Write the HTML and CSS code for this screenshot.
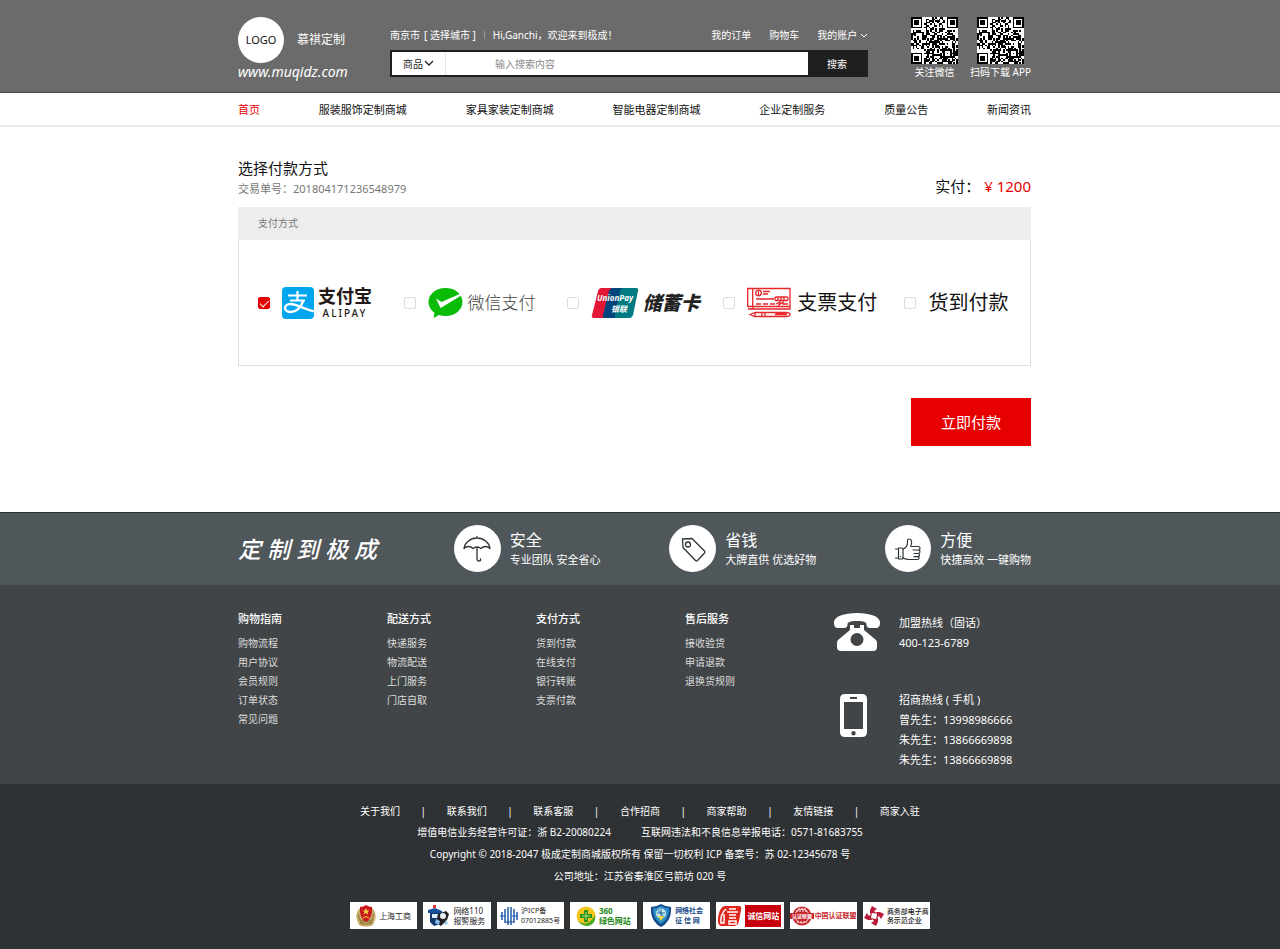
FILE: index.html
```
<!DOCTYPE html>
<html lang="zh-CN">
<head>
<meta charset="UTF-8">
<meta name="viewport" content="width=device-width, initial-scale=1.0">
<title>选择付款方式 - 慕祺定制</title>
<link rel="stylesheet" href="styles.css">
</head>
<body>
<header class="header">
    <div class="wrap header-inner">
        <a class="brand" href="#">
            <span class="brand-top">
                <span class="brand-logo">LOGO</span>
                <span class="brand-name">慕祺定制</span>
            </span>
            <span class="brand-url">www.muqidz.com</span>
        </a>
        <div class="header-main">
            <div class="topbar">
                <span>南京市</span>
                <a class="topbar-city" href="#">[ 选择城市 ]</a>
                <span class="topbar-line"></span>
                <span>Hi,Ganchi，欢迎来到极成！</span>
                <div class="topbar-links">
                    <a href="#">我的订单</a>
                    <a href="#">购物车</a>
                    <a href="#">我的账户 <svg width="8" height="6" viewBox="0 0 8 6"><path d="M1 1l3 3 3-3" fill="none" stroke="currentColor"/></svg></a>
                </div>
            </div>
            <form class="search">
                <div class="search-type">
                    <select aria-label="搜索类型"><option>商品</option><option>店铺</option></select>
                    <svg width="10" height="7" viewBox="0 0 10 7"><path d="M1 1l4 4 4-4" fill="none" stroke="#222" stroke-width="1.3"/></svg>
                </div>
                <input class="search-input" type="text" placeholder="输入搜索内容" aria-label="搜索内容">
                <button class="search-btn" type="button">搜索</button>
            </form>
        </div>
        <div class="codes">
            <div class="code"><svg class="qr" viewBox="0 0 29 29" shape-rendering="crispEdges"></svg><span>关注微信</span></div>
            <div class="code"><svg class="qr" viewBox="0 0 29 29" shape-rendering="crispEdges"></svg><span>扫码下载 APP</span></div>
        </div>
    </div>
</header>

<nav class="nav">
    <div class="wrap nav-inner">
        <a class="active" href="#">首页</a>
        <a href="#">服装服饰定制商城</a>
        <a href="#">家具家装定制商城</a>
        <a href="#">智能电器定制商城</a>
        <a href="#">企业定制服务</a>
        <a href="#">质量公告</a>
        <a href="#">新闻资讯</a>
    </div>
</nav>

<main class="wrap main">
    <div class="order">
        <div>
            <h1>选择付款方式</h1>
            <p class="order-no">交易单号：201804171236548979</p>
        </div>
        <p class="order-total">实付： <span>¥ 1200</span></p>
    </div>
    <div class="pay">
        <h2 class="pay-head">支付方式</h2>
        <div class="pay-list">
            <label class="pay-item">
                <input type="checkbox" checked>
                <svg class="pay-logo" width="32" height="32" viewBox="0 0 32 32">
                    <rect width="32" height="32" rx="4" fill="#00a5ef"/>
                    <g fill="none" stroke="#fff" stroke-width="2.2">
                        <path d="M6 8.500h19M8 13.500h15M15.500 4v9.500"/>
                        <path d="M21.500 13.500c-2 5-5.500 11.500-12.500 11.500-3.500 0-6-1.500-6-4 0-2 2-4 5.500-4 6 0 13 5 24 7.500" stroke-width="2.400"/>
                    </g>
                </svg>
                <span class="alipay"><b>支付宝</b><span>ALIPAY</span></span>
            </label>
            <label class="pay-item">
                <input type="checkbox">
                <svg class="pay-logo" width="35" height="32" viewBox="0 0 35 32">
                    <path d="M17.500 1C8 1 .5 7.200.5 15c0 4.500 2.300 8.200 6 10.800L5.500 31l5.500-3c2 .7 4.200 1 6.500 1C27 29 34.500 22.800 34.500 15S27 1 17.500 1z" fill="#0abb07"/>
                    <path d="M8 11.500l5.500 3.500L34 6v2L13.500 20.500q-1 .5-1.500-.5z" fill="#fff"/>
                </svg>
                <span class="wechat">微信支付</span>
            </label>
            <label class="pay-item">
                <input type="checkbox">
                <svg class="pay-logo" width="48" height="32" viewBox="0 0 48 32">
                    <path d="M10 1h14l-7 30H3q-3 0-2-3L7 4q1-3 3-3z" fill="#e21836"/>
                    <path d="M22 1h14l-7 30H14q-3 0-2-3L18 4q1-3 4-3z" fill="#00447c"/>
                    <path d="M33 1h12q3 0 2 3l-5 24q-1 3-4 3H26q-3 0-2-3l5-24q1-3 4-3z" fill="#007b84"/>
                    <text class="union-en" x="6" y="14">UnionPay</text>
                    <text class="union-cn" x="20" y="25">银联</text>
                </svg>
                <span class="deposit">储蓄卡</span>
            </label>
            <label class="pay-item">
                <input type="checkbox">
                <svg class="pay-logo cheque-logo" width="44" height="32" viewBox="0 0 44 32">
                    <g fill="none" stroke="#e8262b" stroke-width="1.300">
                        <path d="M.7 1.500h5v18h-5zM5.500 1.500h37.500v20.500H6V19.500M1 22h5M6 19.500h37"/>
                        <circle cx="11.500" cy="6" r="2.800"/>
                        <path d="M11.500 4v4M16 4.500h7M16 7h5"/>
                        <path d="M9 12h18" stroke-width="1.500"/>
                        <path d="M9 17h5M16 17h5M23 17h5M29 17l4-2-1 3 4-3v2h5"/>
                        <rect x="28" y="10" width="13" height="3.500" rx="1"/>
                        <path d="M31 10v3M34 10v3M37 10v3"/>
                        <path d="M3 27.500l5-2h31q4 0 4 2t-4 2H8zM8 25.500v4M15 25.500v4M18 25.500v4M28 27.500h12l-3-1h-6z"/>
                    </g>
                </svg>
                <span class="pay-name">支票支付</span>
            </label>
            <label class="pay-item">
                <input type="checkbox">
                <span class="pay-name">货到付款</span>
            </label>
        </div>
    </div>
    <button class="pay-btn" type="button">立即付款</button>
</main>

<footer class="footer">
    <section class="service">
        <div class="wrap service-inner">
            <div class="slogan">定 制 到 极 成</div>
            <div class="service-item">
                <span class="service-icon">
                    <svg width="28" height="28" viewBox="0 0 28 28" fill="none" stroke="#2e3538" stroke-width="1.300" stroke-linecap="round" stroke-linejoin="round">
                        <path d="M14 1.500v1.500M1 13.500C1.500 8 7 3 14 3S26.500 8 27 13.500q-2-2-4.500-2T18 13.500q-1.800-1.500-4-1.500T10 13.500q-2-2-4.500-2T1 13.500zM14 12v11.500q0 2.500 2 2.500t1.500-2"/>
                    </svg>
                </span>
                <div class="service-text"><h3>安全</h3><p>专业团队 安全省心</p></div>
            </div>
            <div class="service-item">
                <span class="service-icon">
                    <svg width="28" height="28" viewBox="0 0 28 28" fill="none" stroke="#2e3538" stroke-width="1.300" stroke-linejoin="round">
                        <path d="M3.500 4l9.500-.5L25.500 16q1 1 0 2L18.500 25.500q-1 1-2 0L4 12.500z"/>
                        <circle cx="9" cy="9.500" r="2.500"/>
                    </svg>
                </span>
                <div class="service-text"><h3>省钱</h3><p>大牌直供 优选好物</p></div>
            </div>
            <div class="service-item">
                <span class="service-icon">
                    <svg width="28" height="28" viewBox="0 0 28 28" fill="none" stroke="#2e3538" stroke-width="1.200" stroke-linecap="round" stroke-linejoin="round">
                        <path d="M1.500 14h3M1.500 23h3M4.500 13h3.500q1 0 1 1v9q0 1-1 1H4.500zM6.500 21.500v.2"/>
                        <path d="M9 14c3-1 4.500-4 4.500-7V5.500q0-1.500 1.500-1.500c2 0 3 2 2.500 4l-.7 3.500H24q2 0 2 1.800T24 15h-5M24 15q2 0 2 1.700T24 18.500h-4M24 18.500q1.500 0 1.500 1.600T24 21.700h-4M23.500 21.700q1.500 0 1.500 1.400T23.500 24.500H15q-3 0-6-1.500"/>
                    </svg>
                </span>
                <div class="service-text"><h3>方便</h3><p>快捷高效 一键购物</p></div>
            </div>
        </div>
    </section>

    <section class="help">
        <div class="wrap help-inner">
            <div class="help-col">
                <h4>购物指南</h4>
                <a href="#">购物流程</a>
                <a href="#">用户协议</a>
                <a href="#">会员规则</a>
                <a href="#">订单状态</a>
                <a href="#">常见问题</a>
            </div>
            <div class="help-col">
                <h4>配送方式</h4>
                <a href="#">快递服务</a>
                <a href="#">物流配送</a>
                <a href="#">上门服务</a>
                <a href="#">门店自取</a>
            </div>
            <div class="help-col">
                <h4>支付方式</h4>
                <a href="#">货到付款</a>
                <a href="#">在线支付</a>
                <a href="#">银行转账</a>
                <a href="#">支票付款</a>
            </div>
            <div class="help-col">
                <h4>售后服务</h4>
                <a href="#">接收验货</a>
                <a href="#">申请退款</a>
                <a href="#">退换货规则</a>
            </div>
            <div class="contact">
                <div class="contact-row">
                    <svg width="46" height="40" viewBox="0 0 46 40" fill="#fff">
                        <path d="M23 0C10 0 0 3.500 0 9.500 0 13 1 15 4.500 15h5c3 0 4-1 4-3.500 0-2 2-3.500 9.500-3.500s9.500 1.500 9.500 3.500c0 2.500 1 3.500 4 3.500h5c3.500 0 4.500-2 4.500-5.500C46 3.500 36 0 23 0z"/>
                        <path fill-rule="evenodd" d="M16 12h4v3h6v-3h4v5l12 10q1 1 1 3v4q0 4-4 4H7q-4 0-4-4v-4q0-2 1-3l12-10zM23 20a6.500 6.500 0 100 13 6.500 6.500 0 000-13z"/>
                    </svg>
                    <div class="contact-text"><p>加盟热线（固话）</p><p>400-123-6789</p></div>
                </div>
                <div class="contact-row">
                    <svg class="contact-mobile" width="40" height="44" viewBox="0 0 40 44">
                        <path fill="#fff" fill-rule="evenodd" d="M11 0h17q5 0 5 5v33q0 5-5 5H11q-5 0-5-5V5q0-5 5-5zM10 8v27h19V8zM16 3v2h7V3zM19.500 37a2.200 2.200 0 100 4.400 2.200 2.200 0 000-4.400z"/>
                    </svg>
                    <div class="contact-text"><p>招商热线 ( 手机 )</p><p>曾先生：13998986666</p><p>朱先生：13866669898</p><p>朱先生：13866669898</p></div>
                </div>
            </div>
        </div>
    </section>

    <section class="legal">
        <div class="legal-links">
            <a href="#">关于我们</a><i>|</i>
            <a href="#">联系我们</a><i>|</i>
            <a href="#">联系客服</a><i>|</i>
            <a href="#">合作招商</a><i>|</i>
            <a href="#">商家帮助</a><i>|</i>
            <a href="#">友情链接</a><i>|</i>
            <a href="#">商家入驻</a>
        </div>
        <p class="legal-license"><span>增值电信业务经营许可证：浙 B2-20080224</span><span>互联网违法和不良信息举报电话：0571-81683755</span></p>
        <p>Copyright © 2018-2047 极成定制商城版权所有 保留一切权利 ICP 备案号：苏 02-12345678 号</p>
        <p>公司地址：江苏省秦淮区弓箭坊 020 号</p>
        <div class="badges">
            <a class="badge" href="#">
                <svg width="20" height="22" viewBox="0 0 20 22">
                    <path d="M4 3Q-1 8 1 15l2 5q7 3 14 0l2-5q2-7-3-12z" fill="#c8ad6b"/>
                    <path d="M2 9l3 9M18 9l-3 9M5 19h10M4 15l12 3M16 15L4 18" stroke="#8d7337" fill="none"/>
                    <path d="M10 0q3 2 6 2 1 11-6 15Q3 13 4 2q3 0 6-2z" fill="#c9191e"/>
                    <path d="M10 3l1 2.500h2.500l-2 1.500.8 2.500L10 8 7.700 9.500l.8-2.500-2-1.500H9z" fill="#fbd84a"/>
                    <path d="M7 13q3-3 6 0" stroke="#fbd84a" fill="none"/>
                </svg>
                <span>上海工商</span>
            </a>
            <a class="badge" href="#">
                <svg width="22" height="22" viewBox="0 0 22 22">
                    <path d="M0 5l7-2 7 3v2H0z" fill="#174f9d"/><path d="M5 0h3v3H5z" fill="#e33"/>
                    <path d="M2 8h10v11l-6 2-4-4z" fill="#12366e"/><path d="M4 9h6v4H4z" fill="#d8ecfa"/>
                    <path d="M10 9l8-3 3 3-2 6-6 6-5-3z" fill="#222"/><circle cx="15" cy="11" r="3" fill="#e9eef2"/>
                    <path d="M8 14l4 2-1 4-4-2zM17 15l3 3-3 2z" fill="#7ebde8"/>
                </svg>
                <span>网络110<br>报警服务</span>
            </a>
            <a class="badge badge-icp" href="#">
                <svg width="18" height="20" viewBox="0 0 18 20" fill="none" stroke="#1e5aa5" stroke-width="1.500">
                    <path d="M2 6v8M5 3v14M8 1v18M11 1v18M14 3v14M17 6v8"/><path d="M0 10h6M12 10h6M5 16h8" stroke-width="1"/>
                </svg>
                <span>沪ICP备<br>07012885号</span>
            </a>
            <a class="badge badge-green" href="#">
                <svg width="20" height="20" viewBox="0 0 20 20">
                    <circle cx="10" cy="10" r="9.500" fill="#f5c51b"/><path d="M2 15Q12 22 19 9q1 7-4 10-7 3-13-4z" fill="#46a823"/>
                    <path d="M8 4h4v4h4v4h-4v4H8v-4H4V8h4z" fill="#299322"/><path d="M10 6v8M6 10h8" stroke="#b8e067"/>
                </svg>
                <span>360<br>绿色网站</span>
            </a>
            <a class="badge badge-blue" href="#">
                <svg width="22" height="23" viewBox="0 0 22 23">
                    <path d="M11 0q5 3 10 3 1 14-10 20Q0 17 1 3q5 0 10-3z" fill="#164c8c"/>
                    <path d="M11 2q4 2 8 2.500Q19 15 11 20 3 15 3 4.500 7 4 11 2z" fill="#2e91c9"/>
                    <circle cx="11" cy="9.500" r="5" fill="#c8e9ed"/><path d="M7 9h8M11 5v9M8 6l6 7" stroke="#1d68a3"/><path d="M8 12l3 5 3-5z" fill="#f0db3d"/>
                </svg>
                <span>网络社会<br>征 信 网</span>
            </a>
            <a class="badge badge-trust" href="#">
                <svg width="24" height="22" viewBox="0 0 24 22">
                    <path d="M6 1h15q3 0 2 4l-2 11q-1 5-5 5H4q-4 0-4-5 0-12 6-15z" fill="#e1261c"/>
                    <path d="M8 4Q2 9 3 18h3V9M11 4h7M9 7h11M11 10h7M11 13h7M11 16v3h7v-3z" fill="none" stroke="#fff" stroke-width="1.500"/>
                </svg>
                <span>诚信网站</span>
            </a>
            <a class="badge badge-union" href="#">
                <svg width="24" height="20" viewBox="0 0 24 20">
                    <circle cx="12" cy="10" r="9.500" fill="#c9252b"/><circle cx="12" cy="10" r="7" fill="none" stroke="#fff" stroke-width=".8"/>
                    <path d="M6 5h12M8 3h8M7 16h10" stroke="#fff" stroke-dasharray="2 1"/>
                    <path d="M0 7h24v6H0z" fill="#c9252b"/><text class="seal-text" x="2" y="12">认证联盟</text>
                </svg>
                <span>中国认证联盟</span>
            </a>
            <a class="badge badge-small" href="#">
                <svg width="20" height="20" viewBox="0 0 20 20" fill="#b91c3a">
                    <path d="M8 0l5 3-3 2 3 3-4-1-3 1V4z"/><path d="M20 8l-3 5-2-3-3 3 1-4-1-3h4z"/>
                    <path d="M12 20l-5-3 3-2-3-3 4 1 3-1v4z"/><path d="M0 12l3-5 2 3 3-3-1 4 1 3H4z"/>
                </svg>
                <span>商务部电子商<br>务示范企业</span>
            </a>
        </div>
    </section>
</footer>

<script>
    // size of the code in modules
    var SIZE = 29;

    // true/false inside a finder square, null outside of all of them
    function finder(x, y) {
        var corners = [[0, 0], [SIZE - 7, 0], [0, SIZE - 7]];
        for (var i = 0; i < corners.length; i++) {
            var dx = x - corners[i][0];
            var dy = y - corners[i][1];
            if (dx >= -1 && dx <= 7 && dy >= -1 && dy <= 7) {
                var d = Math.max(Math.abs(dx - 3), Math.abs(dy - 3));
                return d === 3 || d <= 1;
            }
        }
        var a = Math.max(Math.abs(x - 22), Math.abs(y - 22));
        return a <= 2 ? a !== 1 : null;
    }

    function drawCode(svg) {
        var seed = 7123;
        var path = '';
        for (var y = 0; y < SIZE; y++) {
            for (var x = 0; x < SIZE; x++) {
                seed = (seed * 16807) % 2147483647;
                var dark = finder(x, y);
                if (dark === null) dark = seed / 2147483647 < 0.54;
                if (dark) path += 'M' + x + ' ' + y + 'h1v1h-1z';
            }
        }
        svg.innerHTML = '<path d="' + path + '"/>';
    }

    document.querySelectorAll('.qr').forEach(drawCode);
</script>
</body>
</html>
```
FILE: styles.css
```
* {
    box-sizing: border-box;
}

body {
    margin: 0;
    background: #fff;
    color: #111;
    font-family: "Noto Sans", "Noto Sans CJK SC", sans-serif;
    font-size: 10px;
    line-height: 20px;
}

h1, h2, h3, h4, p {
    margin: 0;
    font-weight: 400;
}

a {
    color: inherit;
    text-decoration: none;
}

button, input, select {
    margin: 0;
    font: inherit;
}

svg {
    flex: none;
}

.wrap {
    max-width: 804px;
    margin: 0 auto;
    padding-right: 11px;
}

/* header */
.header {
    background: #6b6b6b;
    border-bottom: 1px solid #444;
    color: #fff;
}

.header-inner {
    display: flex;
    padding-top: 17px;
    padding-bottom: 11px;
}

.brand {
    width: 152px;
}

.brand-top {
    display: flex;
    align-items: center;
    gap: 13px;
}

.brand-logo {
    width: 46px;
    height: 46px;
    border-radius: 50%;
    background: #fff;
    color: #111;
    font-size: 11px;
    line-height: 46px;
    text-align: center;
}

.brand-name {
    font-size: 12px;
}

.brand-url {
    display: block;
    font-size: 14px;
    font-style: italic;
    line-height: 18px;
}

.header-main {
    flex: 1;
    padding-top: 8px;
}

.topbar {
    display: flex;
    align-items: center;
}

.topbar-city {
    margin-left: 4px;
}

.topbar-line {
    width: 1px;
    height: 8px;
    margin: 0 8px;
    background: #999;
}

.topbar-links {
    display: flex;
    gap: 18px;
    margin-left: auto;
}

.search {
    display: flex;
    height: 27px;
    margin-top: 5px;
    border: 2px solid #1f1f1f;
    background: #fff;
}

.search-type {
    position: relative;
    width: 54px;
    border-right: 1px solid #e5e5e5;
}

.search-type select {
    width: 100%;
    height: 100%;
    padding: 0 0 0 11px;
    border: 0;
    background: none;
    color: #222;
    appearance: none;
}

.search-type svg {
    position: absolute;
    top: 8px;
    right: 11px;
    pointer-events: none;
}

.search-input {
    flex: 1;
    min-width: 0;
    padding: 0 49px;
    border: 0;
    outline: 0;
}

.search-input::placeholder {
    color: #888;
}

.search-btn {
    width: 58px;
    padding: 0;
    border: 0;
    background: #1f1f1f;
    color: #fff;
}

.codes {
    display: flex;
    gap: 12px;
    margin-left: 40px;
}

.code {
    display: flex;
    flex-direction: column;
    align-items: center;
    white-space: nowrap;
}

.code:first-child {
    padding-left: 3px;
}

.code span {
    line-height: 17px;
}

.qr {
    width: 47px;
    height: 47px;
    background: #fff;
}

/* nav */
.nav {
    border-bottom: 2px solid #e8e8e8;
}

.nav-inner {
    display: flex;
    justify-content: space-between;
    padding-top: 2px;
    font-size: 11px;
    line-height: 30px;
}

.nav .active {
    color: #e60000;
}

/* payment */
.main {
    padding-top: 30px;
    padding-bottom: 66px;
}

.order {
    display: flex;
    justify-content: space-between;
    align-items: flex-end;
    margin-bottom: 8px;
}

.order h1 {
    font-size: 15px;
    line-height: 22px;
}

.order-no {
    color: #777;
    font-size: 11px;
}

.order-total {
    font-size: 15px;
    line-height: 26px;
}

.order-total span {
    color: #e60000;
}

.pay-head {
    padding-left: 20px;
    background: #ededed;
    color: #777;
    font-size: 10px;
    line-height: 33px;
}

.pay-list {
    display: grid;
    grid-template-columns: 147fr 163fr 157fr 182fr 107fr;
    align-items: center;
    padding: 47px 19px 46px;
    border: 1px solid #ddd;
    border-top: 0;
}

.pay-item {
    display: flex;
    align-items: center;
    height: 32px;
    white-space: nowrap;
    cursor: pointer;
}

.pay-item input {
    display: grid;
    place-content: center;
    flex: none;
    width: 12px;
    height: 12px;
    margin-right: 12px;
    border: 1px solid #ddd;
    border-radius: 2px;
    background: #fff;
    appearance: none;
}

.pay-item input:checked {
    border-color: #e60000;
    background: #e60000;
}

.pay-item input:checked::after {
    content: "";
    width: 8px;
    height: 4px;
    margin-bottom: 2px;
    border: solid #fff;
    border-width: 0 0 1px 1px;
    transform: rotate(-45deg);
}

.pay-logo {
    margin-right: 4px;
}

.cheque-logo {
    margin-right: 6px;
}

.alipay {
    display: flex;
    flex-direction: column;
    align-items: center;
    color: #231815;
    font-size: 10px;
    font-weight: 500;
    line-height: 14px;
}

.alipay > span {
    letter-spacing: 2px;
}

.alipay b {
    font-size: 18px;
    line-height: 20px;
}

.wechat {
    color: #444;
    font-size: 17px;
    font-weight: 300;
}

.deposit {
    color: #222;
    font-size: 19px;
    font-style: italic;
    font-weight: 900;
}

.union-en, .union-cn {
    fill: #fff;
    font-size: 8px;
    font-style: italic;
    font-weight: 700;
}

.pay-name {
    font-size: 20px;
}

.pay-btn {
    display: block;
    margin: 32px 0 0 auto;
    padding: 0 30px;
    border: 0;
    background: #e60000;
    color: #fff;
    font-size: 15px;
    line-height: 48px;
    cursor: pointer;
}

/* footer */
.footer {
    color: #fff;
}

.service {
    border-top: 1px solid #2b3033;
    background: #50575a;
}

.service-inner {
    display: grid;
    grid-template-columns: 1fr 1fr 1fr 146px;
    align-items: center;
    padding-top: 12px;
    padding-bottom: 13px;
}

.slogan {
    font-size: 23px;
    font-style: italic;
    font-weight: 500;
}

.service-item {
    display: flex;
    align-items: center;
    gap: 9px;
    white-space: nowrap;
}

.service-icon {
    display: flex;
    align-items: center;
    justify-content: center;
    width: 47px;
    height: 47px;
    border-radius: 50%;
    background: #fff;
}

.service-text {
    padding-top: 2px;
}

.service-text h3 {
    font-size: 16px;
}

.service-text p {
    font-size: 11px;
}

.help {
    background: #414547;
}

.help-inner {
    display: grid;
    grid-template-columns: repeat(4, 1fr) 197px;
    padding-top: 24px;
    padding-bottom: 14px;
}

.help-col {
    display: flex;
    flex-direction: column;
    align-items: flex-start;
    color: #ddd;
    line-height: 19px;
}

.help-col h4 {
    margin-bottom: 5px;
    color: #fff;
    font-size: 11px;
    font-weight: 500;
    line-height: 20px;
}

.contact {
    display: flex;
    flex-direction: column;
    gap: 37px;
    padding-top: 4px;
    font-size: 11px;
}

.contact-row {
    display: grid;
    grid-template-columns: 65px 1fr;
    align-items: start;
    white-space: nowrap;
}

.contact-mobile {
    margin-top: 4px;
}

.legal {
    padding: 17px 0 20px;
    background: #2f3235;
    text-align: center;
}

.legal-links {
    display: flex;
    justify-content: space-between;
    max-width: 560px;
    margin: 0 auto;
}

.legal-links i {
    font-style: normal;
}

.legal p {
    line-height: 22px;
}

.legal-license span {
    margin: 0 15px;
}

.badges {
    display: grid;
    grid-template-columns: repeat(8, 1fr);
    gap: 6px;
    max-width: 580px;
    margin: 15px auto 0;
}

.badge {
    display: flex;
    align-items: center;
    justify-content: center;
    gap: 3px;
    height: 27px;
    background: #fff;
    color: #222;
    font-size: 8px;
    line-height: 10px;
    text-align: left;
    white-space: nowrap;
}

.badge-icp {
    font-size: 7px;
}

.badge-green {
    color: #1c8a12;
    font-weight: 700;
}

.badge-blue {
    color: #174a85;
    font-size: 7px;
    font-weight: 700;
}

.badge-trust span {
    padding: 6px 2px;
    background: #c7000b;
    color: #fff;
    font-weight: 700;
}

.badge-union {
    gap: 1px;
    color: #c9252b;
    font-size: 7px;
    font-weight: 700;
}

.badge-small {
    font-size: 7px;
    font-weight: 500;
    line-height: 9px;
}

.seal-text {
    fill: #fff;
    font-size: 5px;
}
```
